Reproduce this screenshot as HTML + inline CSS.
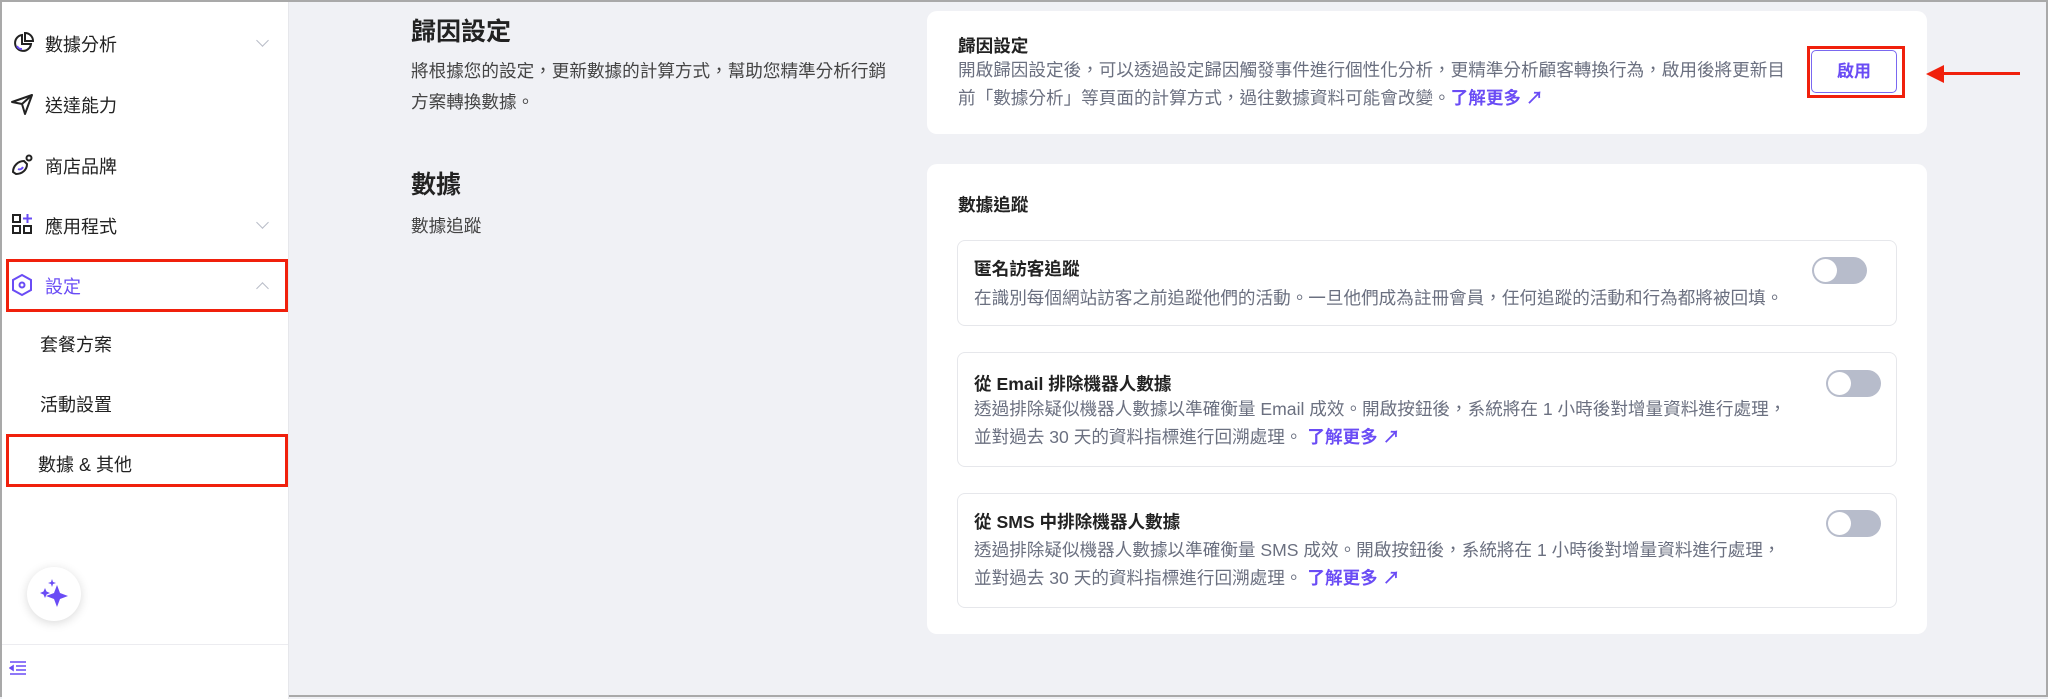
<!DOCTYPE html><html><head><meta charset="utf-8"><style>
*{box-sizing:border-box;margin:0;padding:0}
body{width:2048px;height:697px;overflow:hidden;background:#f0f1f5;font-family:"Liberation Sans","Noto Sans CJK TC",sans-serif;color:#222;position:relative;border:2px solid #a9a9a9}
.a{position:absolute;white-space:nowrap}
.side{position:absolute;left:0;top:0;width:287px;height:697px;background:#fff;border-right:1px solid #e6e7eb}
.nav{font-size:18px;color:#222}
.chev{position:absolute;width:9px;height:9px;border-right:1.5px solid #b8bcc8;border-bottom:1.5px solid #b8bcc8;transform:rotate(45deg)}
.red{position:absolute;border:3px solid #f0200c}
.card{position:absolute;background:#fff;border-radius:10px}
.sub{position:absolute;left:955px;width:940px;border:1px solid #e6e7eb;border-radius:8px;background:#fff}
.t{font-size:17.6px;font-weight:bold;color:#222}
.d{font-size:17.6px;color:#6b7080;line-height:28px}
.lk{color:#6a4cf5;font-weight:bold}
.tg{position:absolute;width:55px;height:27px;border-radius:14px;background:#b7bccb}
.tg:after{content:"";position:absolute;left:2px;top:2px;width:23px;height:23px;border-radius:50%;background:#fff}
</style></head><body>
<div class="side">
<svg class="a" style="left:9px;top:29px" width="24" height="24" viewBox="0 0 24 24" fill="none" stroke="#222" stroke-width="2"><path d="M11 4a8 8 0 1 0 9 9h-9z"/><path d="M14 2v8h8a8 8 0 0 0-8-8z"/><path d="M6 15a5 5 0 0 0 5 3" stroke="#6a4cf5"/></svg>
<div class="a nav" style="left:43px;top:29px">數據分析</div><div class="chev" style="left:256px;top:34px"></div>
<svg class="a" style="left:8px;top:90px" width="24" height="24" viewBox="0 0 24 24" fill="none" stroke="#222" stroke-width="2" stroke-linejoin="round"><path d="M2 10L22 3 15 22 12 12z"/><path d="M12 12l10-9"/></svg>
<div class="a nav" style="left:43px;top:90px">送達能力</div>
<svg class="a" style="left:8px;top:151px" width="24" height="24" viewBox="0 0 24 24" fill="none" stroke="#222" stroke-width="2"><path d="M3 19c0-6 5-11 11-11l3 3c0 6-5 10-11 10z"/><circle cx="19" cy="5" r="2.5"/><path d="M8 16c2 1 4 0 5-2" stroke="#6a4cf5"/></svg>
<div class="a nav" style="left:43px;top:151px">商店品牌</div>
<svg class="a" style="left:9px;top:211px" width="22" height="22" viewBox="0 0 22 22" fill="none" stroke="#222" stroke-width="2"><rect x="2" y="2" width="7" height="7"/><rect x="2" y="13" width="7" height="7"/><rect x="13" y="13" width="7" height="7"/><path d="M16.5 1v9M12 5.5h9" stroke="#6a4cf5"/></svg>
<div class="a nav" style="left:43px;top:211px">應用程式</div><div class="chev" style="left:256px;top:216px"></div>
<svg class="a" style="left:8px;top:271px" width="24" height="24" viewBox="0 0 24 24" fill="none" stroke="#6a4cf5" stroke-width="2"><path d="M12 2l9 5v10l-9 5-9-5V7z"/><circle cx="12" cy="12" r="2.5"/></svg>
<div class="a nav" style="left:43px;top:271px;color:#6a4cf5">設定</div><div class="chev" style="left:256px;top:282px;transform:rotate(225deg)"></div>
<div class="red" style="left:4px;top:257px;width:282px;height:53px"></div>
<div class="a nav" style="left:38px;top:329px">套餐方案</div>
<div class="a nav" style="left:38px;top:389px">活動設置</div>
<div class="a nav" style="left:36px;top:449px">數據 &amp; 其他</div>
<div class="red" style="left:4px;top:432px;width:282px;height:53px"></div>
<div class="a" style="left:25px;top:565px;width:54px;height:54px;border-radius:50%;background:#fff;box-shadow:0 2px 10px rgba(0,0,0,.15)"></div>
<svg class="a" style="left:35px;top:575px" width="34" height="34" viewBox="0 0 34 34" fill="#6a4cf5"><path d="M20 8l3 8 8 3-8 3-3 8-3-8-8-3 8-3z"/><path d="M8 11l1.5 3.5L13 16l-3.5 1.5L8 21l-1.5-3.5L3 16l3.5-1.5z"/><path d="M15 2l1 3 3 1-3 1-1 3-1-3-3-1 3-1z"/></svg>
<div class="a" style="left:0;top:642px;width:286px;height:1px;background:#ececf0"></div>
<svg class="a" style="left:7px;top:659px" width="18" height="14" viewBox="0 0 18 14" fill="none" stroke="#6a4cf5" stroke-width="1.6"><path d="M1 1h16M7 5h10M7 9h10M1 13h16"/><path d="M4 5L1 7l3 2z" fill="#6a4cf5"/></svg>
</div>
<div class="a" style="left:409px;top:10px;font-size:25px;font-weight:bold">歸因設定</div>
<div class="a" style="left:409px;top:54px;font-size:17.6px;color:#444;line-height:31px;white-space:normal;width:478px">將根據您的設定，更新數據的計算方式，幫助您精準分析行銷方案轉換數據。</div>
<div class="a" style="left:409px;top:163px;font-size:25px;font-weight:bold">數據</div>
<div class="a" style="left:409px;top:211px;font-size:17.6px;color:#444">數據追蹤</div>
<div class="card" style="left:925px;top:9px;width:1000px;height:123px"></div>
<div class="a t" style="left:956px;top:31px">歸因設定</div>
<div class="a d" style="left:956px;top:54px">開啟歸因設定後，可以透過設定歸因觸發事件進行個性化分析，更精準分析顧客轉換行為，啟用後將更新目<br>前「數據分析」等頁面的計算方式，過往數據資料可能會改變。<span class="lk">了解更多 ↗</span></div>
<div class="a" style="left:1809px;top:48px;width:86px;height:43px;border:1px solid #7a68f0;border-radius:5px;color:#6a4cf5;font-size:17px;font-weight:bold;text-align:center;line-height:41px;background:#fff">啟用</div>
<div class="red" style="left:1805px;top:44px;width:98px;height:52px"></div>
<div class="a" style="left:1940px;top:70px;width:78px;height:3px;background:#f0200c"></div>
<div class="a" style="left:1924px;top:63px;width:0;height:0;border-top:9px solid transparent;border-bottom:9px solid transparent;border-right:18px solid #f0200c"></div>
<div class="card" style="left:925px;top:162px;width:1000px;height:470px"></div>
<div class="a t" style="left:956px;top:190px">數據追蹤</div>
<div class="sub" style="top:238px;height:86px"></div>
<div class="a t" style="left:972px;top:254px">匿名訪客追蹤</div>
<div class="a d" style="left:972px;top:282px">在識別每個網站訪客之前追蹤他們的活動。一旦他們成為註冊會員，任何追蹤的活動和行為都將被回填。</div>
<div class="tg" style="left:1810px;top:255px"></div>
<div class="sub" style="top:350px;height:115px"></div>
<div class="a t" style="left:972px;top:369px">從 Email 排除機器人數據</div>
<div class="a d" style="left:972px;top:393px">透過排除疑似機器人數據以準確衡量 Email 成效。開啟按鈕後，系統將在 1 小時後對增量資料進行處理，<br>並對過去 30 天的資料指標進行回溯處理。 <span class="lk">了解更多 ↗</span></div>
<div class="tg" style="left:1824px;top:368px"></div>
<div class="sub" style="top:491px;height:115px"></div>
<div class="a t" style="left:972px;top:507px">從 SMS 中排除機器人數據</div>
<div class="a d" style="left:972px;top:534px">透過排除疑似機器人數據以準確衡量 SMS 成效。開啟按鈕後，系統將在 1 小時後對增量資料進行處理，<br>並對過去 30 天的資料指標進行回溯處理。 <span class="lk">了解更多 ↗</span></div>
<div class="tg" style="left:1824px;top:508px"></div>
</body></html>
